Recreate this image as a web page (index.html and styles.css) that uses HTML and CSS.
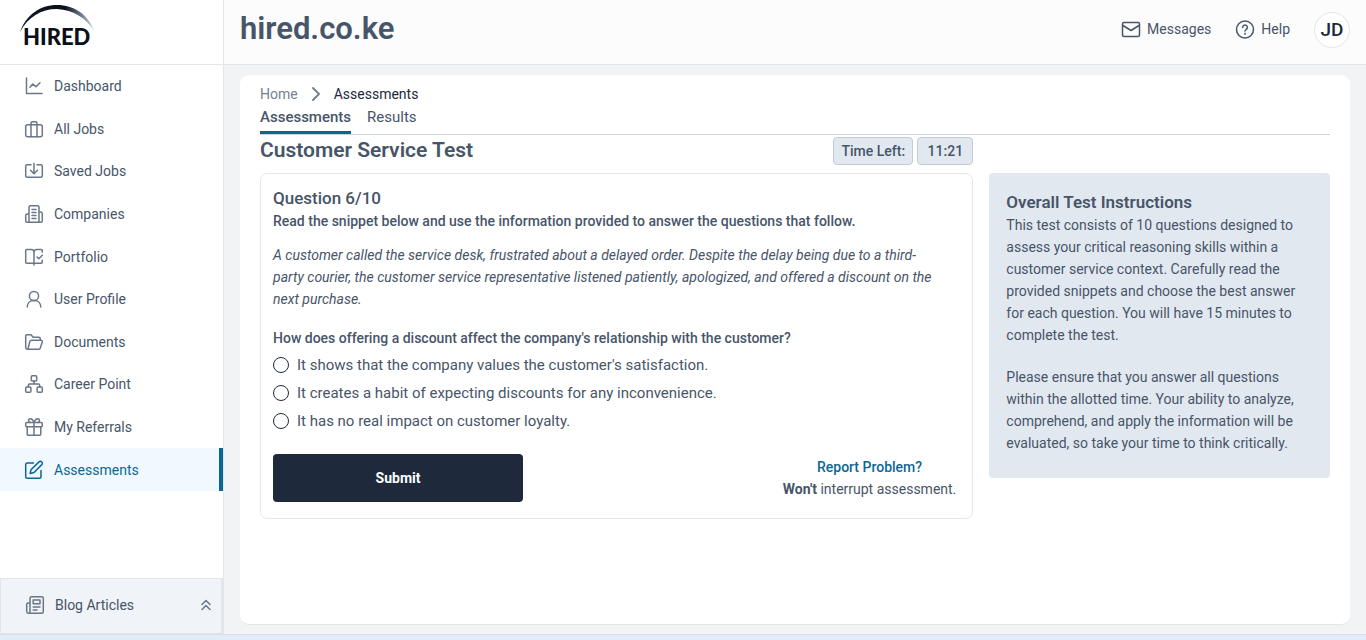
FILE: index.html
```html
<!DOCTYPE html>
<html lang="en">
<head>
    <meta charset="UTF-8">
    <meta name="viewport" content="width=device-width, initial-scale=1.0">
    <title>hired.co.ke - Assessments</title>
    <link rel="stylesheet" href="styles.css">
</head>
<body>
    <div class="app">
        <aside class="sidebar">
            <a href="#" class="logo" aria-label="Hired">
                <svg width="80" height="52" viewBox="0 0 80 52">
                    <defs>
                        <linearGradient id="arc-fade" x1="0" x2="1" y1="0" y2="0">
                            <stop offset="0" stop-color="#111827"/>
                            <stop offset="0.6" stop-color="#0b0f19"/>
                            <stop offset="0.85" stop-color="#8089a0"/>
                            <stop offset="1" stop-color="#e4e6eb"/>
                        </linearGradient>
                    </defs>
                    <path d="M2 30C8 13 22 3 39 3c17 0 31 9 38 27C68 16 56 8 39 7 23 7 10 15 2 30z" fill="url(#arc-fade)"/>
                    <text x="5" y="43" class="logo-text">HIRED</text>
                </svg>
            </a>
            <nav class="nav">
                <a href="#" class="nav-item">
                    <svg class="icon" viewBox="0 0 20 20"><path d="M2.5 2v15.5H18M6 11.3 8.7 8l3.3 2.7 4-4"/></svg>
                    Dashboard
                </a>
                <a href="#" class="nav-item">
                    <svg class="icon" viewBox="0 0 20 20"><rect x="1.7" y="5.7" width="16.6" height="12" rx="2"/><path d="M7 17.7V4.2a1.5 1.5 0 0 1 1.5-1.5h3A1.5 1.5 0 0 1 13 4.2v13.5"/></svg>
                    All Jobs
                </a>
                <a href="#" class="nav-item">
                    <svg class="icon" viewBox="0 0 20 20"><path d="M7 3.7H3.2a1.5 1.5 0 0 0-1.5 1.5v9.6a1.5 1.5 0 0 0 1.5 1.5h13.6a1.5 1.5 0 0 0 1.5-1.5V5.2a1.5 1.5 0 0 0-1.5-1.5H13M10 2.500v10M6.500 9.300l3.500 3.500 3.500-3.500"/></svg>
                    Saved Jobs
                </a>
                <a href="#" class="nav-item">
                    <svg class="icon" viewBox="0 0 20 20"><path d="M5 18.300V3.200a1.500 1.500 0 0 1 1.500-1.500h7A1.500 1.500 0 0 1 15 3.200v15.100M5 10H3.200a1.500 1.500 0 0 0-1.500 1.500v5.300a1.500 1.500 0 0 0 1.500 1.500h13.600a1.500 1.500 0 0 0 1.500-1.500V9.500A1.500 1.500 0 0 0 16.800 8H15M8 5.500h4M8 8.500h4M8 11.500h4M8 14.500h4"/></svg>
                    Companies
                </a>
                <a href="#" class="nav-item">
                    <svg class="icon" viewBox="0 0 20 20"><path d="M10 18v-1.700H2.700a1 1 0 0 1-1-1V3.500a1 1 0 0 1 1-1h4.600A2.700 2.700 0 0 1 10 5.200v11M10 5.200a2.700 2.700 0 0 1 2.700-2.700h4.600a1 1 0 0 1 1 1v1.500M10 16.300h7.300a1 1 0 0 0 1-1v-2M13 10l1.800 1.800L18.300 8.300"/></svg>
                    Portfolio
                </a>
                <a href="#" class="nav-item">
                    <svg class="icon" viewBox="0 0 20 20"><circle cx="10" cy="7" r="4.600"/><path d="M3.200 18c0-3.600 2.400-6.400 6.800-6.400s6.800 2.800 6.800 6.400"/></svg>
                    User Profile
                </a>
                <a href="#" class="nav-item">
                    <svg class="icon" viewBox="0 0 20 20"><path d="M3.300 17.200a1.600 1.600 0 0 1-1.600-1.600V4.200a1.500 1.500 0 0 1 1.500-1.500H7l2.200 2.600h5.600a1.500 1.500 0 0 1 1.500 1.500v1.500M3.300 17.200h11.500a1.500 1.500 0 0 0 1.500-1.200l2-6.200a1.200 1.200 0 0 0-1.200-1.500H7.500a1.800 1.800 0 0 0-1.700 1.200L4.200 16a1.300 1.300 0 0 1-.9 1.200"/></svg>
                    Documents
                </a>
                <a href="#" class="nav-item">
                    <svg class="icon" viewBox="0 0 20 20"><rect x="7.300" y="1.700" width="5.400" height="5.400" rx="1"/><rect x="1.700" y="13" width="5.200" height="5.300" rx="1"/><rect x="13.100" y="13" width="5.200" height="5.300" rx="1"/><path d="M10 7.100v3M4.300 13v-1.600A1.400 1.400 0 0 1 5.700 10h8.600a1.400 1.400 0 0 1 1.400 1.400V13"/></svg>
                    Career Point
                </a>
                <a href="#" class="nav-item">
                    <svg class="icon" viewBox="0 0 20 20"><rect x="1.700" y="5.500" width="16.600" height="4.200" rx="1"/><path d="M3.200 9.700v7.600a1 1 0 0 0 1 1h11.600a1 1 0 0 0 1-1V9.700M10 5.500v12.800M10 5.500C9 2.800 7.500 1.500 6 1.700 4 2 4 5 6 5.500M10 5.500c1-2.700 2.500-4 4-3.800 2 .3 2 3.300 0 3.800"/></svg>
                    My Referrals
                </a>
                <a href="#" class="nav-item active">
                    <svg class="icon" viewBox="0 0 20 20"><path d="M9.500 3H3.200a1.500 1.500 0 0 0-1.500 1.500v12.300a1.500 1.500 0 0 0 1.500 1.500h12.300a1.500 1.500 0 0 0 1.500-1.500v-6.300M7 9.700 15 1.900a1.700 1.700 0 0 1 2.600 0l.2.200a1.700 1.700 0 0 1 0 2.500L10 12.500l-3.800 1z"/></svg>
                    Assessments
                </a>
            </nav>
            <button type="button" class="blog-toggle">
                <svg class="icon" viewBox="0 0 20 20"><path d="M5 3.200a1.500 1.500 0 0 1 1.500-1.500h10.300a1.500 1.500 0 0 1 1.500 1.500v13.600a1.500 1.500 0 0 1-1.500 1.500H3.400a1.700 1.700 0 0 1-1.700-1.700V9.500A1.500 1.500 0 0 1 3.200 8H5M5 3.200v13.600a1.500 1.500 0 0 1-1.500 1.500M8.200 5h6.800v3.800H8.200zM8.200 12H15M8.200 15H12"/></svg>
                <span>Blog Articles</span>
                <svg class="chevrons" viewBox="0 0 10 12"><path d="M1 5.500 5 1.500l4 4M1 10.500l4-4 4 4"/></svg>
            </button>
        </aside>

        <div class="main">
            <header class="header">
                <h1 class="site-name">hired.co.ke</h1>
                <div class="header-links">
                    <a href="#" class="header-link">
                        <svg class="icon" viewBox="0 0 20 20"><rect x="1.500" y="3.500" width="17" height="14" rx="1.500"/><path d="m2 6.500 8 5 8-5"/></svg>
                        Messages
                    </a>
                    <a href="#" class="header-link">
                        <svg class="icon" viewBox="0 0 20 20"><circle cx="10" cy="10.500" r="8.500"/><path d="M7.600 8.500a2.400 2.400 0 1 1 3.600 2.100c-.8.400-1.200.8-1.200 1.500M10 14.300v.900"/></svg>
                        Help
                    </a>
                    <button type="button" class="avatar">JD</button>
                </div>
            </header>

            <main class="panel">
                <div class="breadcrumb">
                    <a href="#">Home</a>
                    <svg viewBox="0 0 10 16"><path d="m2 2 6 6-6 6"/></svg>
                    <span>Assessments</span>
                </div>
                <div class="tabs">
                    <a href="#" class="tab active">Assessments</a>
                    <a href="#" class="tab">Results</a>
                </div>
                <div class="content">
                    <div class="test-header">
                        <h2>Customer Service Test</h2>
                        <div class="timer">
                            <span class="time-label">Time Left:</span>
                            <span class="time-value">11:21</span>
                        </div>
                    </div>
                    <form class="question-card">
                        <h3>Question 6/10</h3>
                        <p class="lead">Read the snippet below and use the information provided to answer the questions that follow.</p>
                        <p class="snippet">A customer called the service desk, frustrated about a delayed order. Despite the delay being due to a third-party courier, the customer service representative listened patiently, apologized, and offered a discount on the next purchase.</p>
                        <p class="question">How does offering a discount affect the company's relationship with the customer?</p>
                        <div class="options">
                            <label><input type="radio" name="answer" value="1"> It shows that the company values the customer's satisfaction.</label>
                            <label><input type="radio" name="answer" value="2"> It creates a habit of expecting discounts for any inconvenience.</label>
                            <label><input type="radio" name="answer" value="3"> It has no real impact on customer loyalty.</label>
                        </div>
                        <div class="actions">
                            <button type="submit" class="submit-btn">Submit</button>
                            <div class="report">
                                <a href="#">Report Problem?</a>
                                <p><strong>Won't</strong> interrupt assessment.</p>
                            </div>
                        </div>
                    </form>
                    <section class="instructions">
                        <h3>Overall Test Instructions</h3>
                        <p>This test consists of 10 questions designed to assess your critical reasoning skills within a customer service context. Carefully read the provided snippets and choose the best answer for each question. You will have 15 minutes to complete the test.</p>
                        <p>Please ensure that you answer all questions within the allotted time. Your ability to analyze, comprehend, and apply the information will be evaluated, so take your time to think critically.</p>
                    </section>
                </div>
            </main>
        </div>
    </div>
    <div class="bottom-strip"></div>
</body>
</html>
```

FILE: styles.css
```css
* {
    box-sizing: border-box;
}
body {
    display: flex;
    flex-direction: column;
    min-height: 100vh;
    margin: 0;
    font-family: Roboto, "Liberation Sans", sans-serif;
    font-size: 14px;
    line-height: 22px;
    color: #475569;
    background-color: #f1f3f5;
}
h1, h2, h3, p {
    margin: 0;
}
a {
    color: inherit;
    text-decoration: none;
}
button {
    font: inherit;
    color: inherit;
    cursor: pointer;
}
svg {
    flex: none;
    fill: none;
    stroke: currentColor;
    stroke-width: 1.5;
    stroke-linecap: round;
    stroke-linejoin: round;
}
.icon {
    width: 20px;
    height: 20px;
}
.app {
    flex: 1;
    display: flex;
}
.bottom-strip {
    height: 6px;
    background-color: #e2ecf8;
    border-top: 1px solid #d5dfef;
}

/* sidebar */
.sidebar {
    flex: none;
    display: flex;
    flex-direction: column;
    width: 224px;
    background-color: #fff;
    border-right: 1px solid #e2e5ea;
}
.logo {
    height: 65px;
    padding: 2px 18px;
    border-bottom: 1px solid #e2e5ea;
}
.logo svg {
    stroke: none;
}
.logo-text {
    font-family: Lato, sans-serif;
    font-size: 22px;
    font-weight: 900;
    fill: #0b0f19;
}
.nav {
    flex: 1;
    display: grid;
    grid-template-rows: repeat(12, minmax(40px, 1fr));
    padding-bottom: 2px;
}
.nav-item {
    display: flex;
    align-items: center;
    gap: 10px;
    padding-left: 24px;
}
.nav-item .icon {
    color: #6b7788;
}
.nav-item.active {
    color: #0c6694;
    background-color: #f0f9ff;
    border-right: 4px solid #0c6694;
}
.nav-item.active .icon {
    color: #0c6694;
}
.blog-toggle {
    display: flex;
    align-items: center;
    gap: 10px;
    height: 56px;
    padding: 0 10px 2px 24px;
    text-align: left;
    background-color: #f0f3f8;
    border: 1px solid #e2e5ea;
    border-right-width: 2px;
}
.blog-toggle .icon,
.blog-toggle .chevrons {
    color: #6b7788;
}
.blog-toggle span {
    flex: 1;
}
.chevrons {
    width: 10px;
    height: 12px;
}

/* header */
.main {
    flex: 1;
    display: flex;
    flex-direction: column;
    min-width: 0;
}
.header {
    display: flex;
    align-items: center;
    justify-content: space-between;
    height: 65px;
    padding: 0 16px;
    background-color: #fcfcfc;
    border-bottom: 1px solid #e2e5ea;
}
.site-name {
    padding-bottom: 6px;
    font-size: 31px;
    line-height: 36px;
    font-weight: 600;
}
.header-links {
    display: flex;
    align-items: center;
    gap: 24px;
    padding-bottom: 4px;
}
.header-link {
    display: flex;
    align-items: center;
    gap: 6px;
    padding-bottom: 2px;
}
.avatar {
    width: 36px;
    height: 36px;
    padding: 0;
    font-size: 19px;
    font-weight: 500;
    color: #1e293b;
    background-color: #fff;
    border: 1px solid #e2e5ea;
    border-radius: 50%;
}

/* page panel */
.panel {
    flex: 1;
    margin: 10px 16px 9px;
    padding: 8px 20px 20px;
    background-color: #fff;
    border-bottom: 1px solid #e2e5ea;
    border-radius: 9px;
}
.breadcrumb {
    display: flex;
    align-items: center;
    gap: 13px;
    margin-bottom: 1px;
    color: #1e293b;
}
.breadcrumb a,
.breadcrumb svg {
    color: #76818f;
}
.breadcrumb svg {
    width: 10px;
    height: 16px;
    stroke-width: 2;
}
.tabs {
    display: flex;
    gap: 16px;
    border-bottom: 1px solid #cbd5e1;
}
.tab {
    height: 28px;
    font-size: 15px;
}
.tab.active {
    font-weight: 500;
    border-bottom: 3px solid #0c6694;
}
.content {
    display: grid;
    grid-template-columns: 2fr 1fr;
    align-items: start;
}
.test-header {
    grid-column: 1;
    display: flex;
    justify-content: space-between;
    height: 38px;
}
.test-header h2 {
    font-size: 21px;
    line-height: 30px;
    font-weight: 600;
}
.timer {
    display: flex;
    gap: 4px;
    padding-top: 2px;
    font-weight: 500;
}
.timer span {
    height: 28px;
    line-height: 26px;
    text-align: center;
    background-color: #e2e8f0;
    border: 1px solid #c3cbd8;
    border-radius: 4px;
}
.time-label {
    width: 80px;
}
.time-value {
    width: 56px;
}
.question-card {
    grid-column: 1;
    padding: 12px 16px 16px 12px;
    border: 1px solid #e5e7eb;
    border-radius: 7px;
}
.question-card h3 {
    font-size: 17px;
    line-height: 24px;
    font-weight: 500;
}
.lead,
.question {
    font-weight: 500;
}
.snippet {
    margin: 12px 0 17px;
    padding-right: 16px;
    font-style: italic;
}
.question {
    margin-bottom: 2px;
}
.options label {
    display: flex;
    align-items: center;
    gap: 8px;
    height: 28px;
    font-size: 15px;
}
.options input {
    appearance: none;
    width: 16px;
    height: 16px;
    margin: 0;
    border: 1px solid #1e293b;
    border-radius: 50%;
}
.options input:checked {
    border-width: 5px;
}
.actions {
    display: flex;
    justify-content: space-between;
    align-items: center;
    margin-top: 19px;
}
.submit-btn {
    width: 250px;
    height: 48px;
    font-weight: 700;
    color: #fff;
    background-color: #1e293b;
    border: none;
    border-radius: 4px;
}
.report {
    text-align: center;
}
.report a {
    font-weight: 500;
    color: #0c6694;
}
.instructions {
    grid-column: 2;
    margin-left: 16px;
    padding: 17px 17px 24px;
    background-color: #e2e8f0;
    border-radius: 4px;
}
.instructions h3 {
    font-size: 17px;
    line-height: 24px;
    font-weight: 600;
}
.instructions p + p {
    margin-top: 20px;
}
```
